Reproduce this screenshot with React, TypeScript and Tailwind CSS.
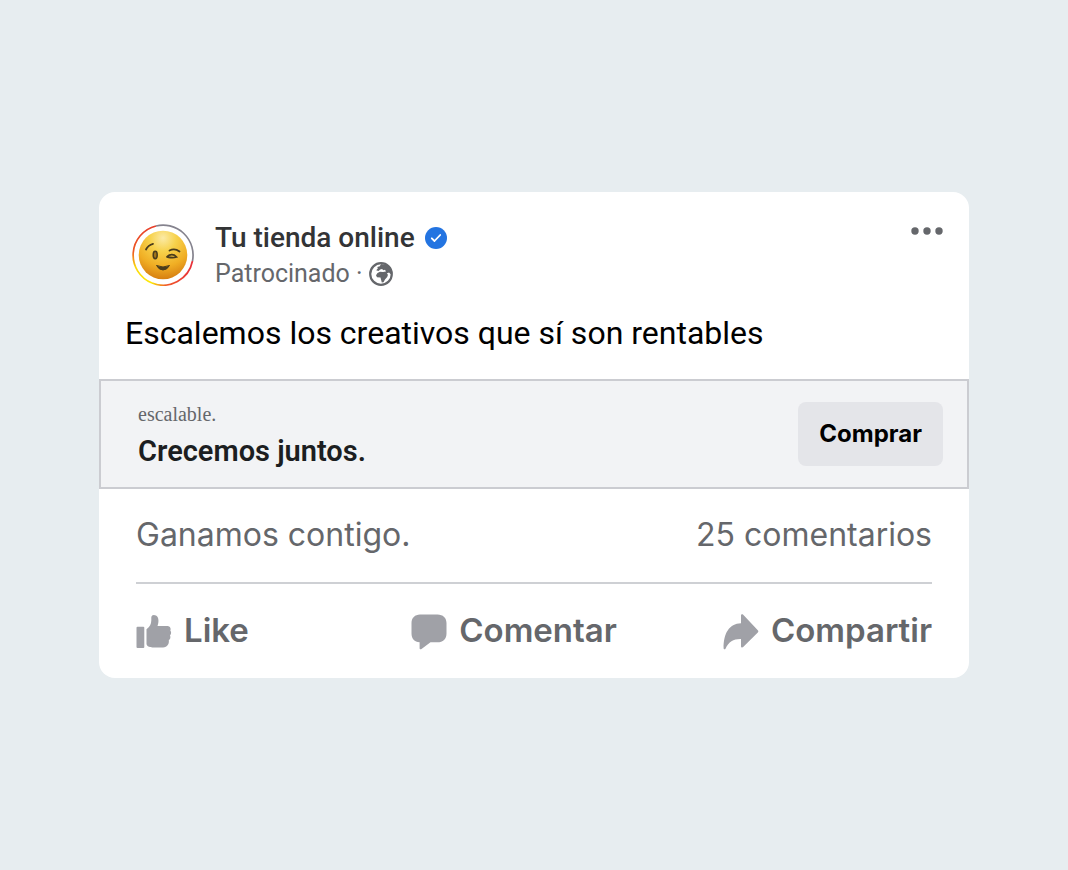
import React from "react";

function Avatar() {
  return (
    <svg className="size-[62px] shrink-0" viewBox="0 0 62 62" role="img" aria-label="Tu tienda online">
      <defs>
        <radialGradient id="face" cx="0.5" cy="0.15" r="0.9">
          <stop offset="0" stopColor="#fbeaa6" />
          <stop offset="0.3" stopColor="#f7d24c" />
          <stop offset="0.65" stopColor="#f0ae24" />
          <stop offset="1" stopColor="#d2760e" />
        </radialGradient>
        <linearGradient id="ringLeft" x1="0" y1="0" x2="0" y2="1">
          <stop offset="0" stopColor="#e8402c" />
          <stop offset="0.45" stopColor="#ee5a22" />
          <stop offset="0.72" stopColor="#fbd80c" />
          <stop offset="1" stopColor="#fde80a" />
        </linearGradient>
        <linearGradient id="ringBottom" x1="0" y1="0" x2="1" y2="0">
          <stop offset="0" stopColor="#fbe10a" />
          <stop offset="0.35" stopColor="#f05a28" />
          <stop offset="1" stopColor="#e8303a" />
        </linearGradient>
      </defs>
      <g fill="none" strokeWidth="1.7">
        <path d="M24 2A30 30 0 0 0 20 59" stroke="url(#ringLeft)" />
        <path d="M20 59A30 30 0 0 0 60.5 37" stroke="url(#ringBottom)" />
        <path d="M60.5 37A30 30 0 0 0 24 2" stroke="#85838e" />
      </g>
      <circle cx="31" cy="31" r="24.3" fill="url(#face)" />
      <g fill="none" stroke="#4a3c1c" strokeLinecap="round" strokeWidth="1.8">
        <path d="M14 25.500C15.500 22.500 17.500 20.700 21 19.800" />
        <path d="M37.500 26.500C40.500 25 44.500 25.200 47.500 27.500" />
        <path d="M35 32.800C38 29.800 42 30 44.500 33C42 33.800 38.500 33.600 35.500 33" />
      </g>
      <ellipse cx="23.200" cy="31" rx="2" ry="3.700" fill="#a0741a" stroke="#4a3c1c" strokeWidth="1.500" />
      <path d="M24.500 41.500Q31 44.500 37.500 41.500Q35 46 31 46Q27 46 24.500 41.500Z" fill="#4a3c1c" stroke="#4a3c1c" strokeLinejoin="round" />
    </svg>
  );
}

function VerifiedIcon() {
  return (
    <svg className="size-[22px]" viewBox="0 0 22 22" role="img" aria-label="Verificado">
      <circle cx="11" cy="11" r="11" fill="#2374e1" />
      <path d="M6.800 11.300l2.700 2.700 5.700-6" fill="none" stroke="#fff" strokeWidth="1.800" strokeLinecap="round" strokeLinejoin="round" />
    </svg>
  );
}

function GlobeIcon() {
  return (
    <svg className="size-6" viewBox="0 0 24 24" role="img" aria-label="Público">
      <circle cx="12" cy="12" r="10.800" fill="none" stroke="#65676b" strokeWidth="2.200" />
      <path
        d="M12 2L10.800 4.200L8.300 5L8.800 6.600L7.200 8.200L9.500 9L11.200 7.600L13 7L14.500 8.200L16 7.800L17 9.500L14 10L11 9.800L8.500 11L7 13.200L8 15.200L11.500 15.600L12 17.500L12.800 20.500L14.500 20.300L16 17.500L18.200 15L19 12.800L17.800 11.500L20 10.600L22.500 13L21.500 7L18 3.200Z"
        fill="#65676b"
      />
    </svg>
  );
}

function LikeIcon() {
  return (
    <svg className="size-9" viewBox="0 0 36 36" fill="#a0a1a7" aria-hidden="true">
      <rect x="0.500" y="12.800" width="7.800" height="21.200" rx="1" />
      <path d="M10.500 15.300C14 12.800 15.200 10 15.300 6.500V3.500C15.300 0.900 18 0.500 20 1.500C23 3.200 23 8 21.500 12H31C34 12 35.300 14.400 34.300 16.600C35.600 18 35.300 20.300 34 21.600C34.900 23.400 34.300 25.300 32.800 26.300C33.300 30 31.500 33.200 27 33.400H16.500C13.500 33.400 10.500 32.300 10.500 29.800Z" />
    </svg>
  );
}

function CommentIcon() {
  return (
    <svg className="size-9" viewBox="0 0 36 36" fill="#a0a1a7" aria-hidden="true">
      <path d="M9 0.500H26.500C32 0.500 35.500 4 35.500 9V19.500C35.500 25 32 28.300 26.500 28.300H19.500L10.500 35C9.500 35.700 8.600 35.300 8.600 34.200V28.300C3.500 28 0.500 24.500 0.500 19.500V9C0.500 4 4 0.500 9 0.500Z" />
    </svg>
  );
}

function ShareIcon() {
  return (
    <svg className="size-9" viewBox="0 0 36 36" fill="#a0a1a7" aria-hidden="true">
      <path d="M18 1.500C18 0.200 19.400 0 20.200 0.800L34.800 16.200C35.500 17 35.500 17.700 34.800 18.500L20.200 33C19.300 33.900 18 33.500 18 32.200V25C10.500 24.800 6 27.500 2.500 34.700C2 35.700 0.600 35.400 0.600 34.200C0.500 19.500 6 9.800 18 9.300Z" />
    </svg>
  );
}

export default function App() {
  return (
    <main className="flex min-h-screen items-center bg-[#e7edf0] px-[99px]">
      <article className="w-full overflow-hidden rounded-2xl bg-white font-['Roboto',sans-serif]">
        <header className="flex items-start pt-7 pr-[26px] pl-[33px]">
          <div className="pt-1">
            <Avatar />
          </div>
          <div className="ml-[21px] flex-1">
            <div className="flex items-center gap-2.5">
              <h1 className="text-[28px] leading-9 font-medium text-[#333436]">Tu tienda online</h1>
              <VerifiedIcon />
            </div>
            <div className="flex items-center gap-1.5 text-[25px] leading-9 text-[#65676b]">
              <span>Patrocinado ·</span>
              <GlobeIcon />
            </div>
          </div>
          <button type="button" aria-label="Más opciones" className="py-[7px]">
            <svg className="h-2 w-8" viewBox="0 0 32 8" fill="#65676b" aria-hidden="true">
              <circle cx="4" cy="4" r="3.700" />
              <circle cx="16" cy="4" r="3.700" />
              <circle cx="28" cy="4" r="3.700" />
            </svg>
          </button>
        </header>
        <p className="px-[26px] pt-5 pb-[25px] text-[32px] leading-[42px] text-black">Escalemos los creativos que sí son rentables</p>
        <section className="flex items-center justify-between border-2 border-[#cbccd1] bg-[#f2f3f5] py-[18px] pr-6 pl-[37px]">
          <div>
            <p className="mb-1 font-['Liberation_Serif',serif] text-[20px] leading-[30px] text-[#65676b]">escalable.</p>
            <h2 className="text-[29px] leading-9 font-semibold text-[#1c1e21]">Crecemos juntos.</h2>
          </div>
          <button type="button" className="h-16 rounded-lg bg-[#e4e5e9] px-[21px] font-['Inter',sans-serif] text-[24px] font-bold text-black">
            Comprar
          </button>
        </section>
        <footer className="px-[37px] font-['Inter',sans-serif] text-[#65676b]">
          <div className="flex items-center justify-between border-b-2 border-[#ced0d4] pt-[26px] pb-[27px] text-[32px] leading-10">
            <span>Ganamos contigo.</span>
            <span>25 comentarios</span>
          </div>
          <div className="grid grid-cols-[1fr_auto_auto] gap-x-[106px] pt-[26px] pb-7 text-[33px] leading-10 font-semibold">
            <button type="button" className="flex items-end gap-3">
              <LikeIcon />
              Like
            </button>
            <button type="button" className="flex items-end gap-3">
              <CommentIcon />
              Comentar
            </button>
            <button type="button" className="flex items-end gap-3">
              <ShareIcon />
              Compartir
            </button>
          </div>
        </footer>
      </article>
    </main>
  );
}
